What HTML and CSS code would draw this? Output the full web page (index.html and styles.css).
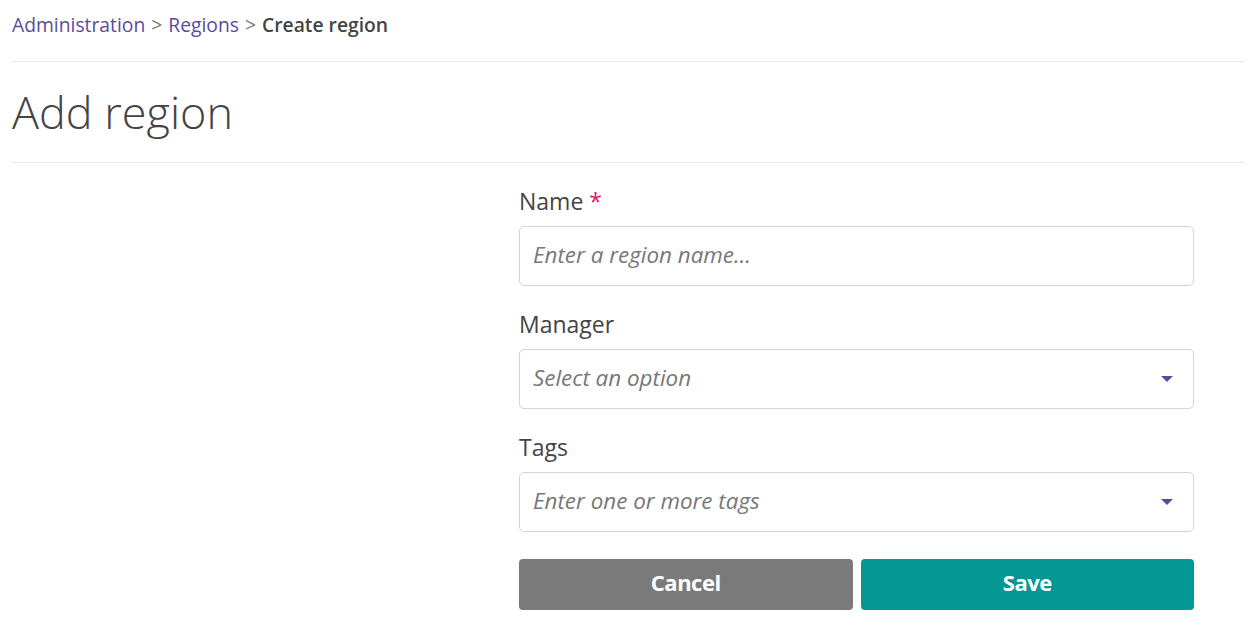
FILE: index.html
```html
<!DOCTYPE html>
<html lang="en">
<head>
<meta charset="utf-8">
<title>Create region</title>
<link rel="stylesheet" href="styles.css">
</head>
<body>
<div class="page">
  <nav class="crumbs">
    <a href="#" class="crumb-link">Administration</a>
    <span class="sep">&gt;</span>
    <a href="#" class="crumb-link">Regions</a>
    <span class="sep">&gt;</span>
    <span class="crumb-current">Create region</span>
  </nav>
  <h1 class="title">Add region</h1>
  <form class="form">
    <div class="field">
      <label class="label">Name <span class="req">*</span></label>
      <div class="control"><span class="placeholder">Enter a region name…</span></div>
    </div>
    <div class="field">
      <label class="label">Manager</label>
      <div class="control select"><span class="placeholder">Select an option</span><span class="caret"></span></div>
    </div>
    <div class="field">
      <label class="label">Tags</label>
      <div class="control select"><span class="placeholder">Enter one or more tags</span><span class="caret"></span></div>
    </div>
    <div class="actions">
      <button type="button" class="btn btn-cancel">Cancel</button>
      <button type="button" class="btn btn-save">Save</button>
    </div>
  </form>
</div>
</body>
</html>
```

FILE: styles.css
```css
html, body {
  margin: 0;
  padding: 0;
  background: #fff;
}
body {
  font-family: "Open Sans", "Liberation Sans", sans-serif;
  color: #444;
}
.page {
  padding: 0 0 0 12px;
}
.crumbs {
  font-size: 19.3px;
  height: 62px;
  line-height: 50px;
  box-sizing: border-box;
  border-bottom: 1px solid #e8e8e8;
  color: #777;
}
.crumb-link {
  color: #5a4c9c;
  text-decoration: none;
}
.sep {
  color: #777;
  margin: 0 1px;
}
.crumb-current {
  color: #444;
  font-weight: 600;
}
.title {
  margin: 0;
  font-weight: 300;
  font-size: 45px;
  line-height: 100px;
  height: 101px;
  box-sizing: border-box;
  border-bottom: 1px solid #e8e8e8;
  color: #444;
}
.form {
  margin-left: 507px;
  width: 675px;
  padding-top: 21px;
  display: flex;
  flex-direction: column;
  gap: 21px;
}
.field {
  display: flex;
  flex-direction: column;
}
.label {
  font-size: 23px;
  line-height: 34px;
  margin-bottom: 8px;
  color: #444;
}
.req {
  color: #e0156b;
}
.control {
  height: 60px;
  box-sizing: border-box;
  border: 1px solid #d4d4d4;
  border-radius: 5px;
  display: flex;
  align-items: center;
  padding: 0 14px 3px 13px;
  justify-content: space-between;
}
.placeholder {
  font-style: italic;
  font-size: 22.4px;
  color: #777;
}
.caret {
  width: 0;
  height: 0;
  border-left: 6px solid transparent;
  border-right: 6px solid transparent;
  border-top: 6px solid #5a4c9c;
  margin-right: 6px;
  margin-top: 3px;
}
.actions {
  display: flex;
  gap: 8px;
  margin-top: 6px;
}
.btn {
  flex: 1;
  height: 51px;
  border: none;
  border-radius: 4px;
  padding: 0 0 5px;
  color: #fff;
  font-family: "Open Sans", "Liberation Sans", sans-serif;
  font-weight: 700;
  font-size: 22px;
  letter-spacing: -0.5px;
}
.btn-cancel {
  background: #7a7a7a;
}
.btn-save {
  background: #039894;
}
```
